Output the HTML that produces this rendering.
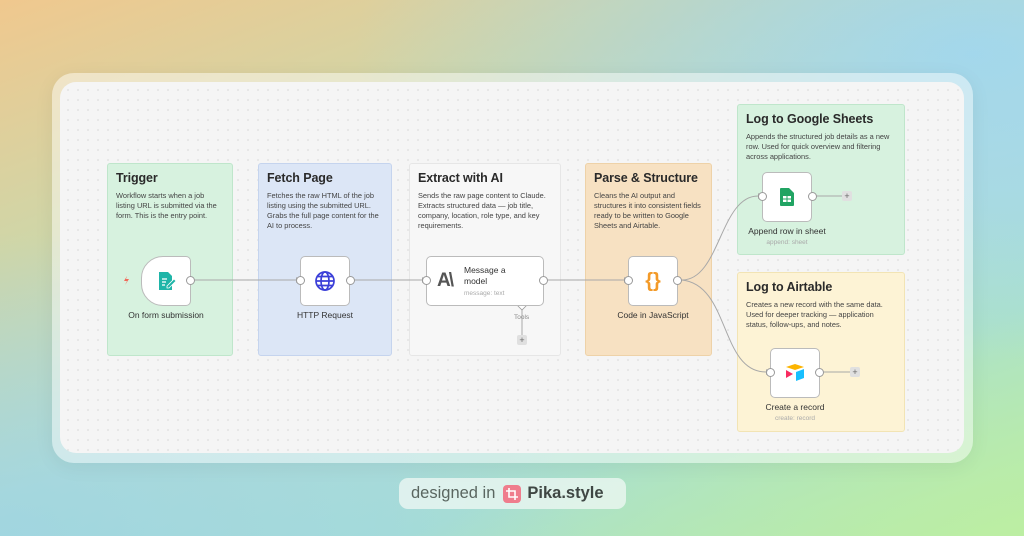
<!DOCTYPE html>
<html><head><meta charset="utf-8"><style>
*{margin:0;padding:0;box-sizing:border-box}
body{width:1024px;height:536px;overflow:hidden;font-family:"Liberation Sans",sans-serif;position:relative;
background:linear-gradient(160deg,#f0c88e 0%,#cfd6a8 28%,#b4dcd6 55%,#a6dcd8 75%,#b8eaa8 100%);}
.glow{position:absolute;inset:0;background:radial-gradient(ellipse at 95% 10%,rgba(160,215,240,.9),transparent 45%),radial-gradient(ellipse at 0% 100%,rgba(150,210,230,.6),transparent 40%),radial-gradient(ellipse at 100% 100%,rgba(190,240,160,.7),transparent 45%)}
.frame{position:absolute;left:52px;top:73px;width:921px;height:390px;border-radius:22px;background:rgba(255,255,255,.45);box-shadow:0 4px 20px rgba(0,0,0,.06)}
.canvas{position:absolute;left:60px;top:82px;width:904px;height:371px;border-radius:16px;background-color:#f5f5f5;
background-image:radial-gradient(circle,#d4d4d4 0.6px,transparent 0.9px);background-size:10px 10px;background-position:3px 3px}
.box{position:absolute;border:1px solid;border-radius:3px;padding:7px 8px}
.box h2{font-size:12.5px;font-weight:bold;color:#2a2a2a;margin-bottom:6px;letter-spacing:-.1px}
.box p{font-size:7.4px;line-height:10px;color:#444}
.node{position:absolute;width:50px;height:50px;background:#fff;border:1px solid #bbb;border-radius:5px;display:flex;align-items:center;justify-content:center}
.port{position:absolute;width:9px;height:9px;border:1px solid #999;border-radius:50%;background:#fff}
.lbl{position:absolute;font-size:8.5px;color:#333;text-align:center;width:140px}
.sub{position:absolute;font-size:6.5px;color:#aaa;text-align:center;width:140px}
.plus{position:absolute;width:10px;height:10px;background:#e0e0e0;border-radius:2px;font-size:9px;line-height:10px;text-align:center;color:#666}
svg.lines{position:absolute;left:0;top:0}
</style></head><body>
<div class="glow"></div>
<div class="frame"></div>
<div class="canvas"></div>

<div class="box" style="left:107px;top:163px;width:126px;height:193px;background:#d7f2df;border-color:#bfe6cb"><h2>Trigger</h2><p>Workflow starts when a job listing URL is submitted via the form. This is the entry point.</p></div>
<div class="box" style="left:258px;top:163px;width:134px;height:193px;background:#dce6f6;border-color:#c5d4ee"><h2>Fetch Page</h2><p>Fetches the raw HTML of the job listing using the submitted URL. Grabs the full page content for the AI to process.</p></div>
<div class="box" style="left:409px;top:163px;width:152px;height:193px;background:#f7f7f7;border-color:#e6e6e6"><h2>Extract with AI</h2><p>Sends the raw page content to Claude. Extracts structured data — job title, company, location, role type, and key requirements.</p></div>
<div class="box" style="left:585px;top:163px;width:127px;height:193px;background:#f7e1c2;border-color:#eed2a8"><h2>Parse &amp; Structure</h2><p>Cleans the AI output and structures it into consistent fields ready to be written to Google Sheets and Airtable.</p></div>
<div class="box" style="left:737px;top:104px;width:168px;height:151px;background:#d7f2df;border-color:#bfe6cb"><h2>Log to Google Sheets</h2><p>Appends the structured job details as a new row. Used for quick overview and filtering across applications.</p></div>
<div class="box" style="left:737px;top:272px;width:168px;height:160px;background:#fdf3d5;border-color:#f2e4b4"><h2>Log to Airtable</h2><p>Creates a new record with the same data. Used for deeper tracking — application status, follow-ups, and notes.</p></div>

<svg class="lines" width="1024" height="536">
<g stroke="#a8a8a8" stroke-width="1" fill="none">
<line x1="195" y1="280" x2="296" y2="280"/>
<line x1="355" y1="280" x2="422" y2="280"/>
<line x1="548" y1="280" x2="624" y2="280"/>
<path d="M682 280 C720 280,720 196,758 196"/>
<path d="M682 280 C730 285,720 372,766 372"/>
<line x1="817" y1="196" x2="842" y2="196"/>
<line x1="824" y1="372" x2="850" y2="372"/>
<line x1="522" y1="310" x2="522" y2="335"/>
</g>
<g fill="#a8a8a8"><path d="M296 277l4 3-4 3z"/><path d="M422 277l4 3-4 3z"/><path d="M624 277l4 3-4 3z"/><path d="M758 193l4 3-4 3z"/><path d="M766 369l4 3-4 3z"/></g>
<path d="M522 302l4 4-4 4-4-4z" fill="#fff" stroke="#999" stroke-width=".8"/>
<path d="M127 276l-3 5h3l-2 4 4-6h-3z" fill="#f06a5a"/>
</svg>

<div class="node" style="left:141px;top:256px;width:50px;border-radius:22px 5px 5px 22px">
<svg width="22" height="22" viewBox="0 0 22 22"><path d="M4 2h9l4 4v14H4z" fill="#1fb5a8"/><g stroke="#fff" stroke-width="1.3"><line x1="7" y1="9" x2="12" y2="9"/><line x1="7" y1="12" x2="11" y2="12"/><line x1="7" y1="15" x2="10" y2="15"/></g><path d="M12 16l7-7 2 2-7 7h-2z" fill="#1fb5a8" stroke="#fff" stroke-width=".8"/></svg></div>
<div class="port" style="left:186px;top:276px"></div>
<div class="lbl" style="left:96px;top:310px">On form submission</div>

<div class="node" style="left:300px;top:256px"><svg width="22" height="22" viewBox="0 0 22 22" fill="none" stroke="#3b3fd8" stroke-width="1.7"><circle cx="11" cy="11" r="9"/><ellipse cx="11" cy="11" rx="4" ry="9"/><line x1="2" y1="11" x2="20" y2="11"/><path d="M3.5 6.5h15M3.5 15.5h15"/></svg></div>
<div class="port" style="left:296px;top:276px"></div><div class="port" style="left:346px;top:276px"></div>
<div class="lbl" style="left:255px;top:310px">HTTP Request</div>

<div class="node" style="left:426px;top:256px;width:118px;justify-content:flex-start;padding-left:10px">
<span style="font-size:19px;font-weight:bold;color:#555;letter-spacing:-2px">A\</span>
<div style="margin-left:12px"><div style="font-size:8.5px;color:#333;line-height:11px">Message a<br>model</div><div style="font-size:6.5px;color:#aaa;margin-top:3px">message: text</div></div></div>
<div class="port" style="left:422px;top:276px"></div><div class="port" style="left:539px;top:276px"></div>
<div style="position:absolute;left:514px;top:314px;font-size:6.5px;color:#888">Tools</div>
<div class="plus" style="left:517px;top:335px">+</div>

<div class="node" style="left:628px;top:256px"><span style="font-size:20px;font-weight:bold;color:#f39a28">{}</span></div>
<div class="port" style="left:624px;top:276px"></div><div class="port" style="left:673px;top:276px"></div>
<div class="lbl" style="left:583px;top:310px">Code in JavaScript</div>

<div class="node" style="left:762px;top:172px"><svg width="14" height="18" viewBox="0 0 14 18"><path d="M0 1a1 1 0 011-1h8l5 5v12a1 1 0 01-1 1H1a1 1 0 01-1-1z" fill="#21a463"/><rect x="3" y="8" width="8" height="6" fill="#fff"/><g stroke="#21a463" stroke-width="1"><line x1="3" y1="11" x2="11" y2="11"/><line x1="7" y1="8" x2="7" y2="14"/></g></svg></div>
<div class="port" style="left:758px;top:192px"></div><div class="port" style="left:808px;top:192px"></div>
<div class="plus" style="left:842px;top:191px">+</div>
<div class="lbl" style="left:717px;top:226px">Append row in sheet</div>
<div class="sub" style="left:717px;top:239px">append: sheet</div>

<div class="node" style="left:770px;top:348px"><svg width="22" height="20" viewBox="0 0 22 20"><path d="M11 1l9 3-9 3-9-3z" fill="#fcb400"/><path d="M12 9l8-3v9l-8 3z" fill="#18bfff"/><path d="M2 7l7 4-7 4z" fill="#f82b60"/></svg></div>
<div class="port" style="left:766px;top:368px"></div><div class="port" style="left:815px;top:368px"></div>
<div class="plus" style="left:850px;top:367px">+</div>
<div class="lbl" style="left:725px;top:402px">Create a record</div>
<div class="sub" style="left:725px;top:415px">create: record</div>

<div style="position:absolute;left:399px;top:478px;width:227px;height:31px;border-radius:9px;background:rgba(240,248,244,.75);display:flex;align-items:center;padding-left:12px;font-size:16.5px;color:#5a6660">
designed in <span style="display:inline-block;width:18px;height:18px;background:#ef7d8d;border-radius:4px;margin:0 6px 0 8px;position:relative"><svg width="18" height="18" viewBox="0 0 18 18" fill="none" stroke="#fff" stroke-width="1.6"><path d="M6 3v9h9M3 6h9v9"/></svg></span><b style="color:#3f4744">Pika.style</b></div>
</body></html>
